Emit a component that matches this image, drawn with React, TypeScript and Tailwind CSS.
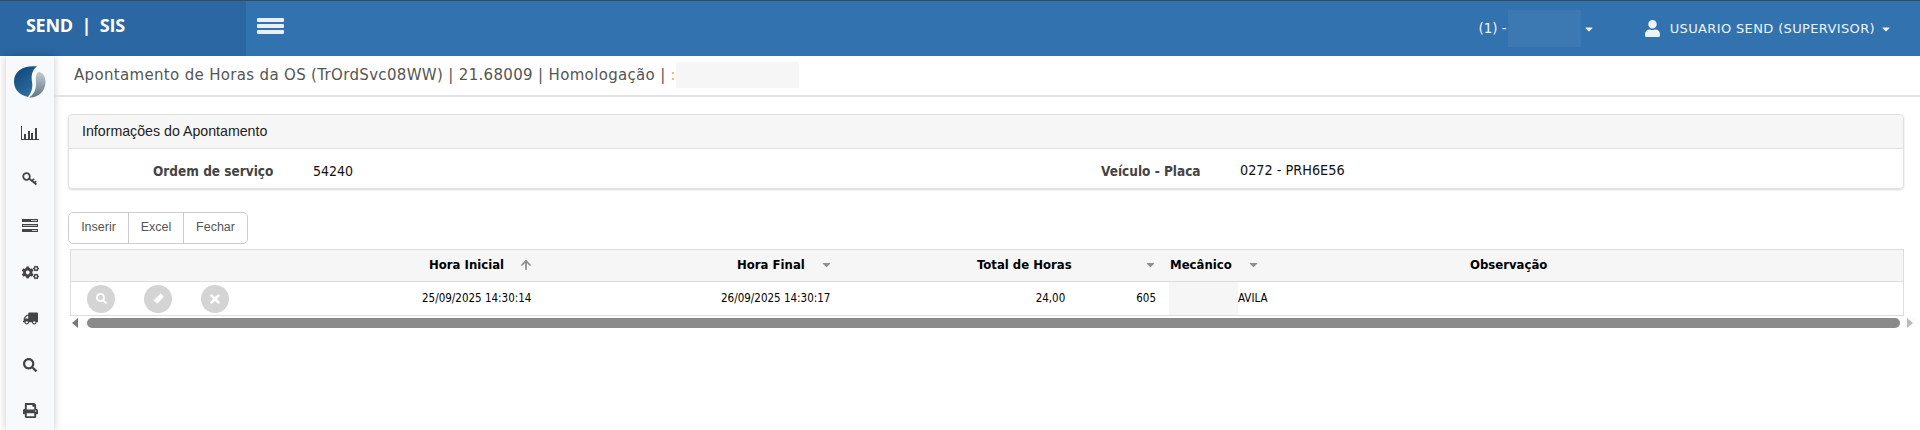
import { FaCaretDown, FaCogs, FaPrint, FaSearch, FaTimes, FaTruck, FaUser } from "react-icons/fa";
import { FiArrowUp } from "react-icons/fi";

const verdana = "font-['DejaVu_Sans',sans-serif]";

const Logo = () => (
  <svg width="32" height="32" viewBox="0 0 32 32">
    <defs>
      <linearGradient id="logoBlue" x1="0" y1="0" x2="0.6" y2="1">
        <stop offset="0" stopColor="#0d4379" />
        <stop offset="1" stopColor="#2f6f9e" />
      </linearGradient>
      <linearGradient id="logoGray" x1="0" y1="0" x2="0" y2="1">
        <stop offset="0" stopColor="#c3ccd2" />
        <stop offset="1" stopColor="#5f7483" />
      </linearGradient>
    </defs>
    <path d="M23 0.500C10 -1 0 5 0 15.500 0 23 5 29 14 31c4-5 5-10 4-15-1-6 0-12 5-15.500z" fill="url(#logoBlue)" />
    <path d="M24 6c5 0 7.500 4 7.500 10 0 9-7 16-16.500 15.500 5-3 7-8 7-13.500 0-5-1-9 2-12z" fill="url(#logoGray)" />
  </svg>
);

const ChartIcon = () => (
  <svg width="18" height="14" viewBox="0 0 18 14" fill="#444">
    <rect x="0" y="0" width="1" height="14" />
    <rect x="0" y="13" width="18" height="1" />
    <rect x="3" y="8" width="2" height="5" />
    <rect x="7" y="5" width="2" height="8" />
    <rect x="10" y="7" width="2" height="6" />
    <rect x="14" y="2" width="2" height="11" />
  </svg>
);

const KeyIcon = () => (
  <svg width="16" height="14" viewBox="0 0 16 14" fill="none" stroke="#444">
    <circle cx="4.500" cy="4.500" r="3.300" strokeWidth="1.800" />
    <path d="M7.300 6.700 14.500 12.500M10 8.800l2-2M12.500 11l1.500-1.800" strokeWidth="1.800" />
  </svg>
);

const ServerIcon = () => (
  <svg width="16" height="13" viewBox="0 0 16 13" fill="#444">
    <rect x="0" y="0" width="16" height="3" />
    <rect x="0" y="5" width="16" height="3" />
    <rect x="0" y="10" width="16" height="3" />
    <rect x="9" y="1" width="6" height="1" fill="#ccc" />
    <rect x="1" y="6" width="14" height="1" fill="#bbb" />
    <rect x="10" y="11" width="5" height="1" fill="#ccc" />
  </svg>
);

const EraserIcon = () => (
  <svg width="13" height="13" viewBox="0 0 13 13" fill="white">
    <path d="M8.500 1.500 12 4.500 5.500 11.500 1.500 8.500z" />
  </svg>
);

const sideIcons = [
  <ChartIcon key="chart" />,
  <KeyIcon key="key" />,
  <ServerIcon key="server" />,
  <FaCogs key="cogs" size={17} color="#444" />,
  <FaTruck key="truck" size={15} color="#444" className="-scale-x-100" />,
  <FaSearch key="search" size={14} color="#444" />,
  <FaPrint key="print" size={15} color="#444" />,
];

const Sort = () => <FaCaretDown size={13} color="#8f8f8f" />;

const RoundButton = ({ children }: { children: React.ReactNode }) => (
  <div className="flex h-7 w-7 items-center justify-center rounded-full bg-[#d4d4d4] text-white">{children}</div>
);

export default function App() {
  return (
    <div className="flex h-[430px] w-[1920px] flex-col overflow-hidden bg-white">
      <header className={`flex h-14 shrink-0 border-t border-t-[#3d4b59] bg-[#3272ae] text-[#eef3f8] ${verdana}`}>
        <div className="flex w-[246px] items-center bg-[#2a67a3] pl-[26px] pb-[7px] font-['Open_Sans',sans-serif] text-[18px] font-bold tracking-[-0.3px] text-white">
          SEND&nbsp;&nbsp;|&nbsp;&nbsp;SIS
        </div>
        <div className="ml-[11px] flex flex-col gap-[2px] self-center pb-[5px]">
          <div className="h-[4px] w-[27px] rounded-[1px] bg-[#e8eff6]" />
          <div className="h-[4px] w-[27px] rounded-[1px] bg-[#e8eff6]" />
          <div className="h-[4px] w-[27px] rounded-[1px] bg-[#e8eff6]" />
        </div>
        <div className="ml-auto flex items-center text-[13.5px]">
          <span>(1) -</span>
          <div className="ml-[1px] h-[37px] w-[73px] bg-[#3c79b2]" />
          <FaCaretDown size={12} className="ml-[2px]" />
          <FaUser size={17} className="ml-[49px]" />
          <span className="ml-[9px] text-[13px] tracking-[0.36px]">USUARIO SEND (SUPERVISOR)</span>
          <FaCaretDown size={12} className="ml-[5px] mr-[28px]" />
        </div>
      </header>

      <div className="flex min-h-0 flex-1">
        <aside className="ml-[6px] flex w-[48px] shrink-0 flex-col items-center bg-[#f8f9fb] shadow-[0_0_8px_rgba(0,0,0,0.22)]">
          <div className="mt-[10px]">
            <Logo />
          </div>
          <div className="mt-[12px] flex flex-col items-center">
            {sideIcons.map((icon, i) => (
              <div key={i} className="flex h-[46.3px] w-full items-center justify-center">
                {icon}
              </div>
            ))}
          </div>
        </aside>

        <main className="min-w-0 flex-1">
          <div className={`flex h-[41px] items-center border-b-2 border-b-[#e2e2e2] pl-5 pb-[1px] text-[15px] tracking-[0.33px] text-[#555] ${verdana}`}>
            <span>Apontamento de Horas da OS (TrOrdSvc08WW) | 21.68009 | Homologação | </span>
            <span className="ml-[5px] text-[#f5a35c]">:</span>
            <div className="h-[26px] w-[123px] bg-[#f6f6f6]" />
          </div>

          <section className="ml-[14px] mr-4 mt-[17px] h-[75px] rounded-[4px] border border-[#e0e0e0] shadow-[0_1px_2px_rgba(0,0,0,0.15)]">
            <div className="flex h-[34px] items-center rounded-t-[4px] border-b border-b-[#e0e0e0] bg-[#f6f6f6] pl-[13px] font-['Liberation_Sans',sans-serif] text-[14.2px] text-[#222]">
              Informações do Apontamento
            </div>
            <div className="flex h-[38px] items-center pt-[6px] font-['DejaVu_Sans_Condensed','DejaVu_Sans',sans-serif] text-[13.5px] text-[#111]">
              <span className="ml-[84px] w-[160px] font-bold text-[#444]">Ordem de serviço</span>
              <span className="w-[788px] text-[14px]">54240</span>
              <span className="w-[139px] font-bold text-[#444]">Veículo - Placa</span>
              <span className="text-[14.3px]">0272 - PRH6E56</span>
            </div>
          </section>

          <div className="ml-[14px] mt-[23px] flex h-[32px] w-fit rounded-[5px] border border-[#ccc] font-['Liberation_Sans',sans-serif] text-[12.5px] text-[#555]">
            <div className="flex w-[60px] items-center justify-center border-r border-r-[#ccc] pb-[1px]">Inserir</div>
            <div className="flex w-[55px] items-center justify-center border-r border-r-[#ccc] pb-[1px]">Excel</div>
            <div className="flex w-[63px] items-center justify-center pb-[1px]">Fechar</div>
          </div>

          <div className="ml-4 mr-4 mt-[5px] border border-[#ddd] font-['DejaVu_Sans_Condensed','DejaVu_Sans',sans-serif] text-black">
            <div className="grid h-[32px] grid-cols-[330px_290px_260px_215px_235px_1fr] items-center border-b border-b-[#ddd] bg-[#f6f6f6] pb-[2px] text-[13px] font-bold">
              <div />
              <div className="flex items-center pl-[28px]">
                Hora Inicial
                <FiArrowUp size={14} strokeWidth={3} color="#8f8f8f" className="ml-[15px]" />
              </div>
              <div className="flex items-center pl-[46px]">
                Hora Final
                <span className="ml-[15px]">
                  <Sort />
                </span>
              </div>
              <div className="flex items-center pl-[26px]">
                Total de Horas
                <span className="ml-auto pr-[9px]">
                  <Sort />
                </span>
              </div>
              <div className="flex items-center pl-[4px]">
                Mecânico
                <span className="ml-[15px]">
                  <Sort />
                </span>
              </div>
              <div className="pl-[69px]">Observação</div>
            </div>
            <div className="grid h-[33px] grid-cols-[330px_290px_260px_215px_235px_1fr] items-center text-[11.5px]">
              <div className="flex gap-[29px] pl-[16px]">
                <RoundButton>
                  <FaSearch size={11} />
                </RoundButton>
                <RoundButton>
                  <EraserIcon />
                </RoundButton>
                <RoundButton>
                  <FaTimes size={14} />
                </RoundButton>
              </div>
              <div className="pl-[21px]">25/09/2025 14:30:14</div>
              <div className="pl-[30px]">26/09/2025 14:30:17</div>
              <div className="flex justify-end pr-[10px]">
                <span className="mr-[71px]">24,00</span>
                <span>605</span>
              </div>
              <div className="flex items-center pl-[3px]">
                <div className="h-[33px] w-[69px] bg-[#f6f6f6]" />
                <span>AVILA</span>
              </div>
              <div />
            </div>
          </div>

          <div className="ml-[16px] mr-[5px] mt-[2px] flex h-[10px] items-center bg-[#fcfcfc]">
            <div className="ml-[2px] h-0 w-0 border-y-[5px] border-r-[6px] border-y-transparent border-r-[#777]" />
            <div className="ml-[9px] h-[10px] flex-1 rounded-full bg-[#8a8a8a]" />
            <div className="ml-[7px] mr-[2px] h-0 w-0 border-y-[5px] border-l-[6px] border-y-transparent border-l-[#bbb]" />
          </div>
        </main>
      </div>
    </div>
  );
}
